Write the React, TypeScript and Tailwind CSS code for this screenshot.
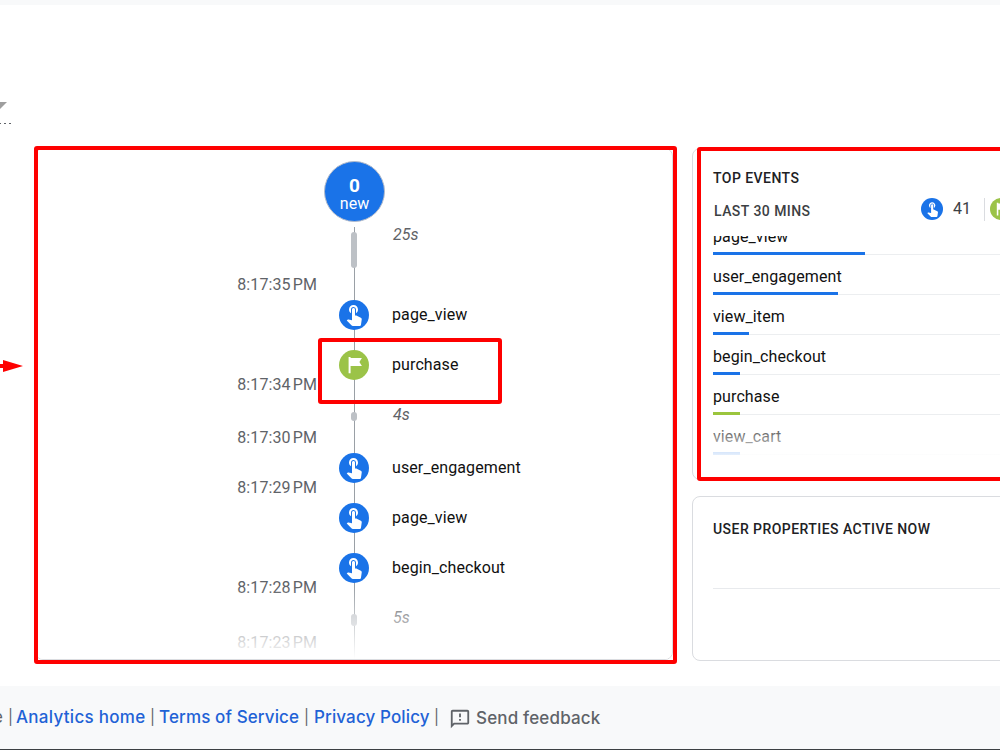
import { MdOutlineFeedback, MdTouchApp } from 'react-icons/md'
import clsx from 'clsx'

type Row =
  | { kind: 'event'; label: string; color: 'blue' | 'green'; time?: string }
  | { kind: 'gap'; label: string; row: string; text: string; bar: string; time: string }

const timeline: Row[] = [
  { kind: 'gap', label: '25s', row: 'h-[63px]', text: 'pt-px', bar: 'mt-[5px] h-9', time: '8:17:35 PM' },
  { kind: 'event', label: 'page_view', color: 'blue' },
  { kind: 'event', label: 'purchase', color: 'green', time: '8:17:34 PM' },
  { kind: 'gap', label: '4s', row: 'h-[53px]', text: 'pt-[18px]', bar: 'mt-[22px] h-[9px]', time: '8:17:30 PM' },
  { kind: 'event', label: 'user_engagement', color: 'blue', time: '8:17:29 PM' },
  { kind: 'event', label: 'page_view', color: 'blue' },
  { kind: 'event', label: 'begin_checkout', color: 'blue', time: '8:17:28 PM' },
  { kind: 'gap', label: '5s', row: 'h-[55px]', text: 'pt-[18px]', bar: 'mt-[21px] h-3', time: '8:17:23 PM' },
]

const topEvents = [
  { name: 'page_view', bar: 'w-[152px] bg-[#1a73e8]' },
  { name: 'user_engagement', bar: 'w-[125px] bg-[#1a73e8]' },
  { name: 'view_item', bar: 'w-9 bg-[#1a73e8]' },
  { name: 'begin_checkout', bar: 'w-[27px] bg-[#1a73e8]' },
  { name: 'purchase', bar: 'w-[27px] bg-[#9bc53d]' },
  { name: 'view_cart', bar: 'w-[27px] bg-[#1a73e8]' },
]

function FlagIcon({ className }: { className?: string }) {
  return (
    <svg viewBox="0 0 20 20" className={className} fill="currentColor">
      <path d="M4 1h2.2v1.2h12.6L16 6.700l2.800 4.500H6.200v8H4z" />
    </svg>
  )
}

function EventDot({ color, small }: { color: 'blue' | 'green'; small?: boolean }) {
  return (
    <span
      className={clsx(
        'flex items-center justify-center rounded-full text-white shrink-0',
        small ? 'size-[22px]' : 'size-[30px]',
        color === 'blue' ? 'bg-[#1a73e8]' : 'bg-[#9bc348]',
      )}
    >
      {color === 'blue'
        ? <MdTouchApp className={small ? 'size-[17px] mb-px' : 'size-6 mb-0.5'} />
        : <FlagIcon className={small ? 'size-[14px]' : 'size-[18px]'} />}
    </span>
  )
}

function TimelineRow({ item }: { item: Row }) {
  return (
    <div className={clsx('flex', item.kind === 'gap' ? item.row : 'h-[50px]')}>
      <div className="w-[281px] -mr-px flex items-end justify-end text-[#5f6368] leading-[10px] tracking-[0.1px] [word-spacing:-2px]">
        {item.time}
      </div>
      <div className="w-[76px] grid justify-items-center">
        <span className="[grid-area:1/1] w-px h-full bg-[#9aa0a6]" />
        {item.kind === 'gap'
          ? <span className={clsx('[grid-area:1/1] w-1.5 rounded-full bg-[#bdc1c6]', item.bar)} />
          : <span className="[grid-area:1/1] self-center"><EventDot color={item.color} /></span>}
      </div>
      {item.kind === 'gap'
        ? <div className={clsx('italic leading-[14px] pl-px text-[#5f6368]', item.text)}>{item.label}</div>
        : <div className="self-center text-[#111] leading-5 pb-px tracking-[0.1px]">{item.label}</div>}
    </div>
  )
}

function Timeline() {
  return (
    <section className="relative w-[638px] h-[512px] border border-[#dadce0] rounded-lg bg-white overflow-hidden">
      <div className="pt-3 pl-[288px]">
        <div className="size-[61px] rounded-full bg-[#1a73e8] border border-[#b4bccb] text-white flex flex-col items-center justify-center pt-[5px]">
          <span className="text-[19px] leading-[19px] font-bold">0</span>
          <span className="text-base leading-[18px]">new</span>
        </div>
      </div>
      <div className="pt-[5px]">
        {timeline.map((item, i) => <TimelineRow key={i} item={item} />)}
        <div className="ml-[318px] w-px h-4 bg-[#9aa0a6]" />
      </div>
      <div className="absolute inset-x-0 bottom-0 h-[72px] bg-linear-to-b from-white/0 to-white" />
    </section>
  )
}

function TopEvents() {
  return (
    <section className="w-[420px] h-[332px] border border-[#dadce0] rounded-lg bg-white pl-5 overflow-hidden">
      <h2 className="pt-[19px] text-sm leading-5 font-medium tracking-[0.45px] text-[#202124]">TOP EVENTS</h2>
      <div className="flex items-center mt-2 h-[26px]">
        <h3 className="w-[208px] pl-px pt-1 text-sm leading-5 font-medium tracking-[0.45px] text-[#3c4043]">LAST 30 MINS</h3>
        <EventDot color="blue" small />
        <span className="w-[41px] pl-[10px] text-[#3c4043]">41</span>
        <span className="w-px h-[23px] bg-[#dadce0] mr-[5px]" />
        <EventDot color="green" small />
      </div>
      <div className="relative mt-3.5 h-[232px] overflow-hidden">
        <ul className="-mt-[20px]">
          {topEvents.map(e => (
            <li key={e.name} className="h-10">
              <div className="h-9 pt-[11px] leading-5 text-[#111] tracking-[0.1px]">{e.name}</div>
              <div className="h-[3px] border-b border-[#eceef0]">
                <div className={clsx('h-[3px]', e.bar)} />
              </div>
            </li>
          ))}
        </ul>
        <div className="absolute inset-x-0 top-[182px] h-[42px] bg-linear-to-b from-white/5 to-white" />
      </div>
    </section>
  )
}

function UserProperties() {
  return (
    <section className="w-[420px] h-[165px] border border-[#dadce0] rounded-lg bg-white pl-5">
      <h2 className="pt-[22px] h-[91px] text-sm leading-5 font-medium tracking-[0.45px] text-[#202124]">
        USER PROPERTIES ACTIVE NOW
      </h2>
      <div className="h-px bg-[#e8eaed]" />
    </section>
  )
}

function Footer() {
  return (
    <footer className="flex items-center h-16 border-b border-[#3c4043] bg-[#f8f9fa] text-[17px] text-[#5f6368] whitespace-nowrap font-['Inter',sans-serif]">
      <span className="-ml-[7px] w-[15px]">e</span>
      <span className="w-2 text-[15px]">|</span>
      <a className="w-[134px] font-medium tracking-[0.28px] text-[#1f62d6]">Analytics home</a>
      <span className="w-[9px] text-[15px]">|</span>
      <a className="w-[145px] font-medium tracking-[0.12px] text-[#1f62d6]">Terms of Service</a>
      <span className="w-[10px] text-[15px]">|</span>
      <a className="w-[120px] font-medium tracking-[0.12px] text-[#1f62d6]">Privacy Policy</a>
      <span className="w-[15px] text-[15px]">|</span>
      <MdOutlineFeedback className="size-[22px] mt-0.5" />
      <span className="pl-[5px] pt-0.5 font-medium tracking-[0.16px]">Send feedback</span>
    </footer>
  )
}

// Red highlight boxes and arrow drawn over the report
function Annotations() {
  return (
    <div className="pointer-events-none">
      <div className="absolute left-[34px] top-[146px] w-[643px] h-[518px] rounded-[3px] border-4 border-[#fe0000]" />
      <div className="absolute left-[318px] top-[338px] w-[184px] h-[66px] rounded-[3px] border-4 border-[#fe0000]" />
      <div className="absolute left-[697px] top-[147px] w-[320px] h-[334px] rounded-[3px] border-4 border-[#fe0000]" />
      <svg className="absolute left-0 top-[359px]" width="24" height="14" viewBox="0 0 24 14" fill="#fe0000">
        <path d="M0 5h3V1l20 6-20 6V9H0z" />
      </svg>
    </div>
  )
}

export default function App() {
  return (
    <div className="relative w-[1000px] h-[750px] overflow-hidden flex flex-col bg-white text-base font-['Roboto',sans-serif]">
      <div className="h-[5px] bg-[#f8f9fa] shrink-0" />
      <div className="h-[143px] pt-[97px] shrink-0">
        <svg width="8" height="7" viewBox="0 0 8 7" fill="#9e9e9e" className="block">
          <path d="M0 0h7L0 7z" />
        </svg>
        <div className="flex gap-[3px] mt-[14px] -ml-px">
          <span className="w-0.5 h-px bg-[#5f6368]" />
          <span className="w-0.5 h-px bg-[#5f6368]" />
          <span className="w-0.5 h-px bg-[#5f6368]" />
        </div>
      </div>
      <main className="flex gap-[19px] pl-[35px] h-[538px] shrink-0">
        <div className="shrink-0"><Timeline /></div>
        <div className="shrink-0 flex flex-col gap-4">
          <TopEvents />
          <UserProperties />
        </div>
      </main>
      <Footer />
      <Annotations />
    </div>
  )
}
